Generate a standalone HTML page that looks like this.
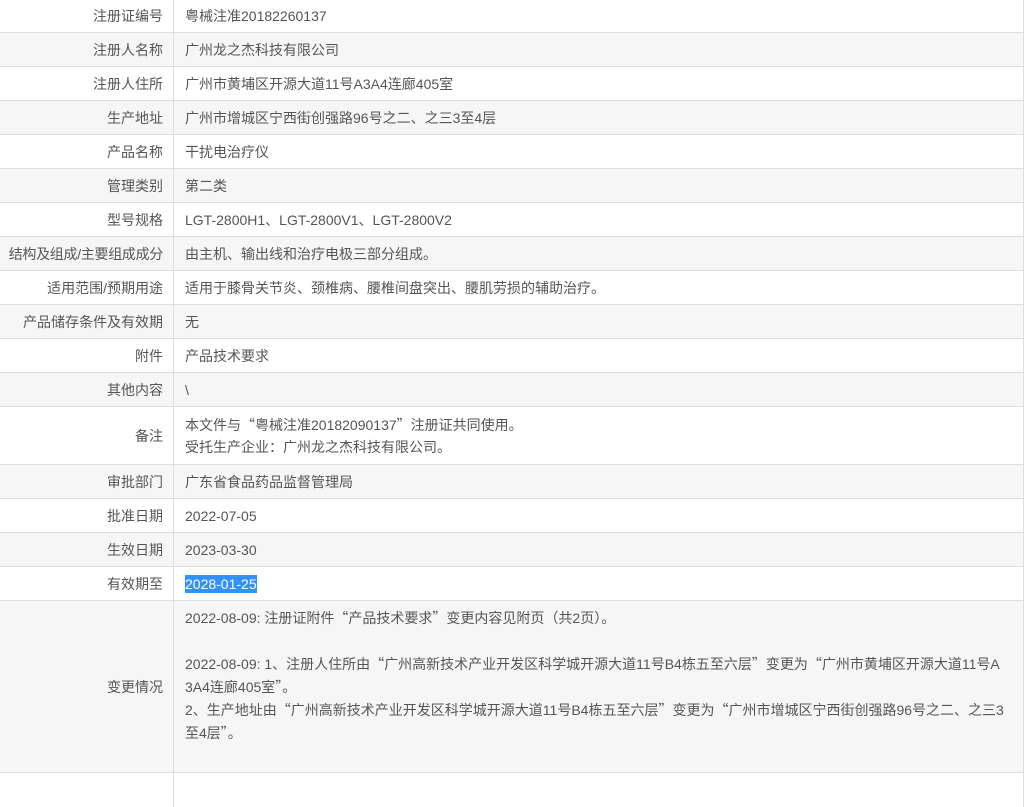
<!DOCTYPE html>
<html><head><meta charset="utf-8"><style>
body{margin:0;width:1029px;height:780px;overflow:hidden;background:#fff;font-family:"Liberation Sans","Noto Sans CJK SC",sans-serif;font-size:14px;color:#555;}
.t{position:absolute;left:0;top:-1px;width:1023px;border-right:1px solid #ddd;}
.r{display:flex;border-bottom:1px solid #ddd;box-sizing:border-box;height:34px;}
.r.g{background:#f6f6f6;}
.l{width:174px;flex-shrink:0;border-right:1px solid #ddd;box-sizing:border-box;text-align:right;padding-right:10px;display:flex;align-items:center;justify-content:flex-end;white-space:nowrap;}
.v{padding-left:11px;display:flex;align-items:center;line-height:22px;white-space:nowrap;}
.sel{background:#3390ff;color:#fff;padding:1px 0;}
.q{font-family:"Noto Sans CJK SC",sans-serif;}
</style></head><body>
<div class="t">
<div class="r"><div class="l">注册证编号</div><div class="v"><div>粤械注准20182260137</div></div></div>
<div class="r g"><div class="l">注册人名称</div><div class="v"><div>广州龙之杰科技有限公司</div></div></div>
<div class="r"><div class="l">注册人住所</div><div class="v"><div>广州市黄埔区开源大道11号A3A4连廊405室</div></div></div>
<div class="r g"><div class="l">生产地址</div><div class="v"><div>广州市增城区宁西街创强路96号之二、之三3至4层</div></div></div>
<div class="r"><div class="l">产品名称</div><div class="v"><div>干扰电治疗仪</div></div></div>
<div class="r g"><div class="l">管理类别</div><div class="v"><div>第二类</div></div></div>
<div class="r"><div class="l">型号规格</div><div class="v"><div>LGT-2800H1、LGT-2800V1、LGT-2800V2</div></div></div>
<div class="r g"><div class="l" style="padding-right:10px;letter-spacing:-0.3px">结构及组成/主要组成成分</div><div class="v"><div>由主机、输出线和治疗电极三部分组成。</div></div></div>
<div class="r"><div class="l">适用范围/预期用途</div><div class="v"><div>适用于膝骨关节炎、颈椎病、腰椎间盘突出、腰肌劳损的辅助治疗。</div></div></div>
<div class="r g"><div class="l">产品储存条件及有效期</div><div class="v"><div>无</div></div></div>
<div class="r"><div class="l">附件</div><div class="v"><div>产品技术要求</div></div></div>
<div class="r g"><div class="l">其他内容</div><div class="v"><div>\</div></div></div>
<div class="r" style="height:58px"><div class="l">备注</div><div class="v"><div>本文件与<span class="q">“</span>粤械注准20182090137<span class="q">”</span>注册证共同使用。<br>受托生产企业<span class="q">：</span>广州龙之杰科技有限公司。</div></div></div>
<div class="r g"><div class="l">审批部门</div><div class="v"><div>广东省食品药品监督管理局</div></div></div>
<div class="r"><div class="l">批准日期</div><div class="v"><div>2022-07-05</div></div></div>
<div class="r g"><div class="l">生效日期</div><div class="v"><div>2023-03-30</div></div></div>
<div class="r"><div class="l">有效期至</div><div class="v"><div><span class="sel">2028-01-25</span></div></div></div>
<div class="r g" style="height:172px"><div class="l">变更情况</div><div class="v" style="align-items:flex-start;padding-top:6px;line-height:23px"><div>2022-08-09: 注册证附件<span class="q">“</span>产品技术要求<span class="q">”</span>变更内容见附页<span class="q">（</span>共2页<span class="q">）</span>。<br><br>2022-08-09: 1、注册人住所由<span class="q">“</span>广州高新技术产业开发区科学城开源大道11号B4栋五至六层<span class="q">”</span>变更为<span class="q">“</span>广州市黄埔区开源大道11号A<br>3A4连廊405室<span class="q">”</span>。<br>2、生产地址由<span class="q">“</span>广州高新技术产业开发区科学城开源大道11号B4栋五至六层<span class="q">”</span>变更为<span class="q">“</span>广州市增城区宁西街创强路96号之二、之三3<br>至4层<span class="q">”</span>。</div></div></div>
<div class="r" style="border-bottom:none"><div class="l"></div><div class="v"></div></div>
</div>
</body></html>
